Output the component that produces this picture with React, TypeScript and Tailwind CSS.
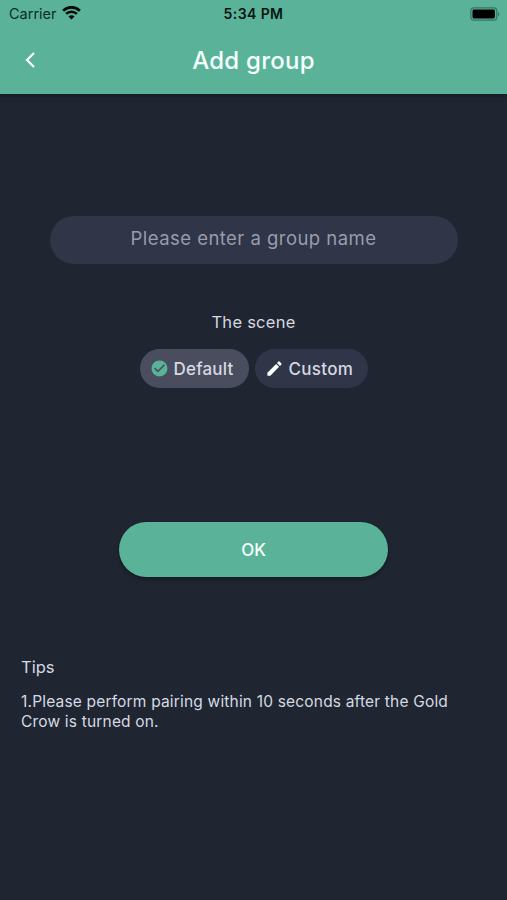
import React from 'react';
import { MdCheckCircle, MdEdit } from 'react-icons/md';

const WifiIcon: React.FC = () => (
    <svg width="19" height="15" viewBox="0 0 19 15" fill="none" aria-hidden="true">
        <path d="M1.1 4.7a12 12 0 0 1 16.8 0" stroke="#020a08" strokeWidth="2.8" />
        <path d="M4.1 7.9a7.7 7.7 0 0 1 10.8 0" stroke="#020a08" strokeWidth="2.5" />
        <path d="M9.5 13.5 6.5 10.5a4.2 4.2 0 0 1 6 0Z" fill="#020a08" />
    </svg>
);

const BatteryIcon: React.FC = () => (
    <svg width="31" height="14" viewBox="0 0 31 14" fill="none" aria-hidden="true">
        <rect x="0.8" y="0.8" width="26" height="12.4" rx="3" stroke="#347763" strokeWidth="1.2" />
        <rect x="2.5" y="2.5" width="22.4" height="9" rx="1.4" fill="#000" />
        <path d="M28 4.8c1.8.8 1.8 3.6 0 4.4Z" fill="#347763" />
    </svg>
);

const StatusBar: React.FC = () => (
    <div className="grid h-[27px] grid-cols-[1fr_80px_1fr] items-center px-[6px] text-[#0c2c23]">
        <div className="flex items-center gap-[5px] pl-[3px]">
            <span className="pt-px text-[14.5px] leading-none">Carrier</span>
            <WifiIcon />
        </div>
        <span className="text-center text-[14px] font-semibold leading-none tracking-[0.4px] text-[#06150f]">5:34 PM</span>
        <div className="flex justify-end">
            <BatteryIcon />
        </div>
    </div>
);

const Header: React.FC = () => (
    <header className="h-[94px] bg-[#5ab399] shadow-[0_2px_5px_rgba(0,0,0,0.35)]">
        <StatusBar />
        <div className="grid h-[66px] grid-cols-[60px_1fr_60px] items-center">
            <button className="flex justify-center" aria-label="Back">
                <svg width="12" height="18" viewBox="0 0 12 18" fill="none">
                    <path d="M10 2 3 9l7 7" stroke="#fff" strokeWidth="2.2" />
                </svg>
            </button>
            <h1 className="pt-px text-center text-[24px] font-medium leading-none tracking-[0.25px] text-[#f4fffc]">
                Add group
            </h1>
        </div>
    </header>
);

export default function App() {
    return (
        <div className="flex h-[900px] w-[507px] flex-col bg-[#1f2632] font-['Inter',sans-serif] text-[#d6d9e2]">
            <Header />
            <main className="flex flex-1 flex-col items-center">
                <input
                    className="mt-[122px] h-[48px] w-[408px] rounded-full bg-[#303548] pb-[4px] text-center text-[18.5px] tracking-[0.46px] outline-none placeholder:text-[#989cac]"
                    placeholder="Please enter a group name"
                />
                <h2 className="mt-[46px] text-[16.5px] leading-[24px] tracking-[0.25px]">The scene</h2>
                <div className="mt-[15px] flex gap-[6px]">
                    <button className="flex h-[39px] w-[109px] items-center gap-[5px] rounded-full bg-[#494d5d] pl-[10px] text-[17px] font-medium tracking-[0.2px]">
                        <MdCheckCircle className="size-[19px] text-[#5ab399]" />
                        <span className="pt-[2px]">Default</span>
                    </button>
                    <button className="flex h-[39px] w-[113px] items-center gap-[5px] rounded-full bg-[#303548] pl-[10px] text-[17px] font-medium tracking-[0.3px]">
                        <MdEdit className="size-[19px] text-white" />
                        <span className="pt-[2px]">Custom</span>
                    </button>
                </div>
                <button className="mt-[134px] h-[55px] w-[269px] rounded-full bg-[#5ab399] pt-[2px] text-[17px] font-medium text-[#f4fffc] shadow-[0_2px_4px_rgba(0,0,0,0.35)]">
                    OK
                </button>
                <section className="mt-[78px] w-full px-[21px]">
                    <h3 className="text-[16.5px] leading-[24px]">Tips</h3>
                    <p className="mt-[13px] w-[440px] text-[15.5px] leading-[19.5px] tracking-[0.18px]">
                        1.Please perform pairing within 10 seconds after the Gold Crow is turned on.
                    </p>
                </section>
            </main>
        </div>
    );
}
